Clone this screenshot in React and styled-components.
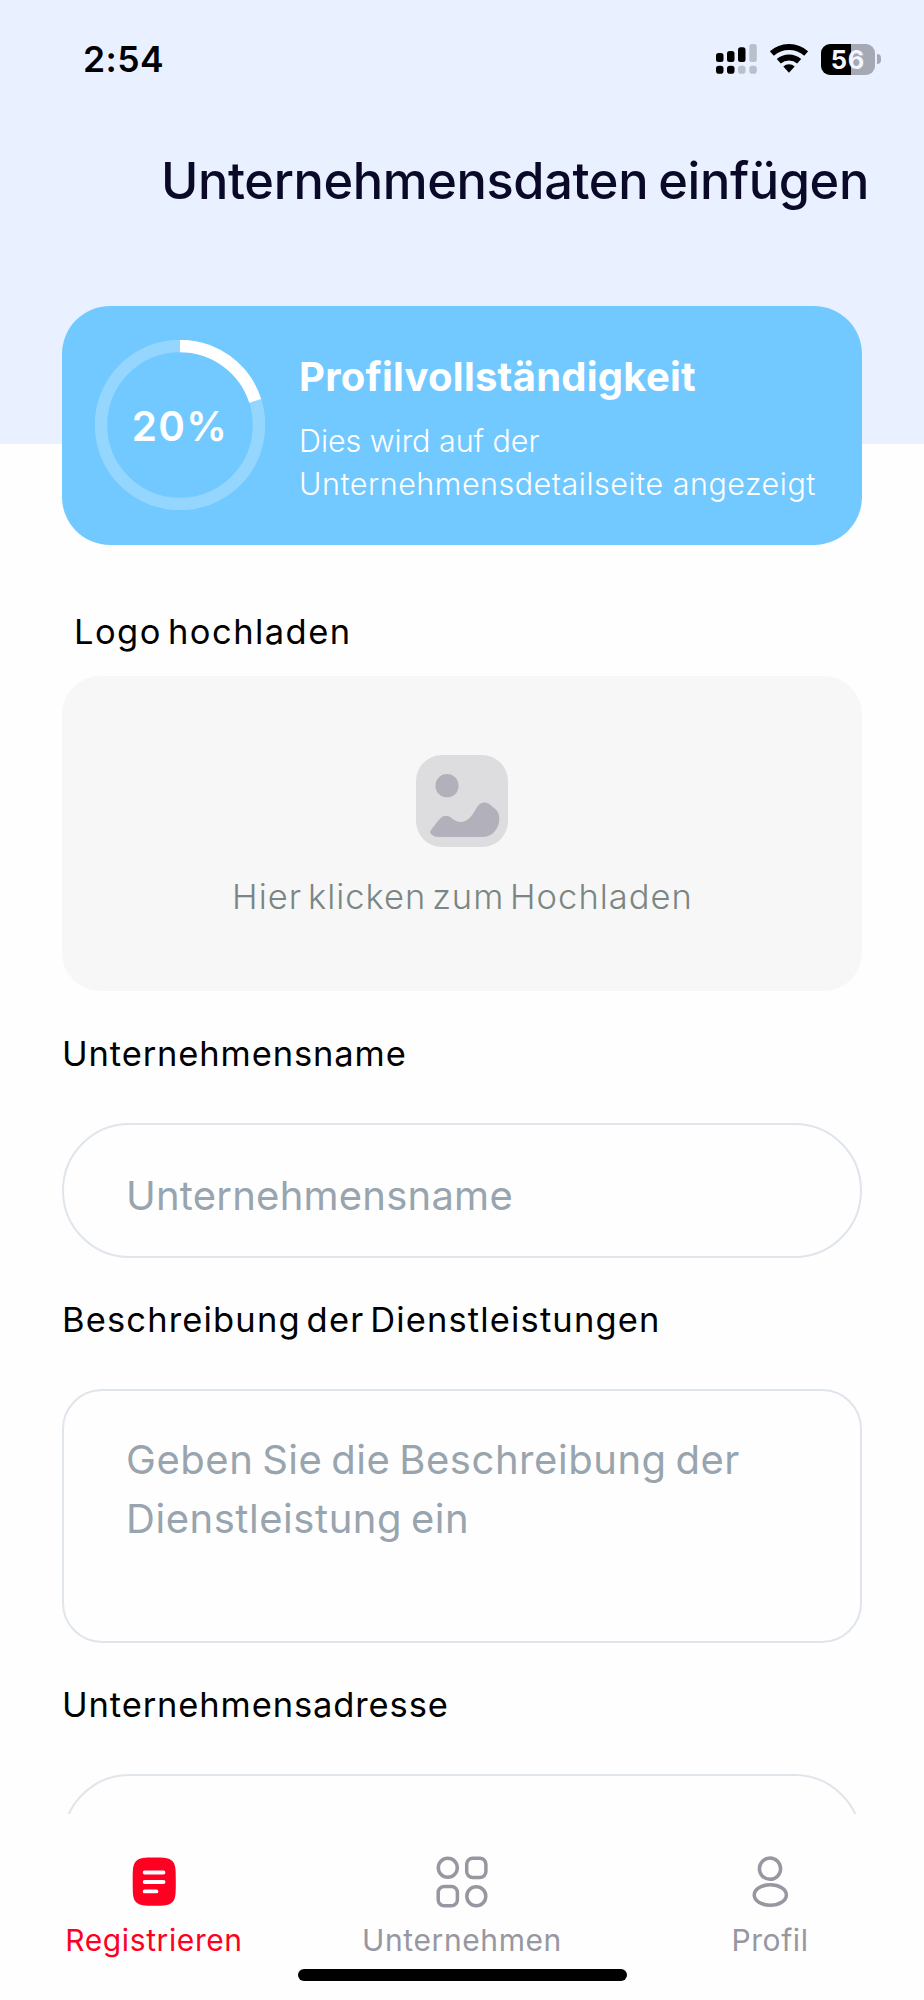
import styled, { createGlobalStyle } from "styled-components";

const GlobalStyle = createGlobalStyle`
  * {
    box-sizing: border-box;
  }
  body {
    margin: 0;
    background-color: #fefefe;
    font-family: "Inter", "Liberation Sans", sans-serif;
  }
`;

const Screen = styled.div`
  width: 924px;
  height: 2000px;
  display: flex;
  flex-direction: column;
  overflow: hidden;
`;

const Content = styled.main`
  flex: 1;
  min-height: 0;
  overflow: hidden;
`;

const Header = styled.header`
  height: 444px;
  background-color: #e9f0ff;
`;

const StatusBar = styled.div`
  height: 118px;
  padding: 0 43px 0 83px;
  display: flex;
  align-items: center;
  justify-content: space-between;
`;

const Time = styled.span`
  font-size: 35.5px;
  font-weight: 600;
  letter-spacing: 0.4px;
  color: #000;
`;

const StatusIcons = styled.div`
  display: flex;
  align-items: center;
  gap: 13px;
`;

const Battery = styled.div`
  display: flex;
  align-items: center;
  gap: 2px;
`;

const BatteryBody = styled.div`
  width: 54px;
  height: 31px;
  border-radius: 9px;
  background: linear-gradient(to right, #000 ${(p) => p.$level}%, #a4a9b4 ${(p) => p.$level}%);
  color: #f3f6ff;
  font-size: 25.5px;
  font-weight: 700;
  letter-spacing: 0.8px;
  line-height: 31px;
  text-align: center;
`;

const BatteryTip = styled.div`
  width: 4px;
  height: 10px;
  border-radius: 0 5px 5px 0;
  background-color: #a4a9b4;
`;

const Title = styled.h1`
  margin: 0;
  padding-left: 161px;
  font-size: 50.5px;
  font-weight: 500;
  line-height: 126px;
  letter-spacing: -0.37px;
  word-spacing: -3px;
  white-space: nowrap;
  color: #0a0a28;
`;

const Body = styled.div`
  padding: 0 62px;
  margin-top: -138px;
`;

const ProgressCard = styled.section`
  height: 239px;
  padding: 0 0 1px 33px;
  display: flex;
  align-items: center;
  gap: 34px;
  border-radius: 48px;
  background-color: #72c9ff;
  color: #fff;
`;

const Ring = styled.div`
  display: grid;
  place-items: center;

  > * {
    grid-area: 1 / 1;
  }
`;

const Percent = styled.span`
  padding-top: 3px;
  font-size: 40.5px;
  font-weight: 600;
  letter-spacing: 1.3px;
`;

const CardText = styled.div`
  padding-top: 8px;
`;

const CardTitle = styled.h2`
  margin: 0 0 19px;
  font-size: 40px;
  font-weight: 700;
  line-height: 48px;
  letter-spacing: 0.24px;
`;

const CardLine = styled.p`
  margin: 0;
  font-size: 30.5px;
  font-weight: 300;
  line-height: 42.4px;
  letter-spacing: ${(p) => p.$spacing}px;
  white-space: nowrap;
`;

const Label = styled.label`
  display: block;
  font-size: 34.5px;
  line-height: 46px;
  letter-spacing: ${(p) => p.$spacing || 0.88}px;
  word-spacing: -5px;
  color: #000;
`;

const UploadSection = styled.section`
  padding-top: 64px;

  ${Label} {
    padding-left: 12px;
  }
`;

const UploadBox = styled.div`
  height: 315px;
  margin-top: 21px;
  padding-top: 79px;
  display: flex;
  flex-direction: column;
  align-items: center;
  border-radius: 38px;
  background-color: #f7f7f7;
`;

const UploadHint = styled.span`
  margin-top: 27px;
  padding-left: 1px;
  font-size: 34.5px;
  font-weight: 300;
  line-height: 46px;
  letter-spacing: 1.02px;
  word-spacing: -5px;
  color: #7a8683;
`;

const Field = styled.div`
  margin-top: ${(p) => p.$top || 39}px;
`;

const Input = styled.input`
  display: block;
  width: 100%;
  height: 135px;
  margin-top: 46px;
  padding: 10px 61px 0 62px;
  border: 2px solid #dfe5eb;
  border-radius: 68px;
  outline: none;
  background: transparent;
  font-family: inherit;
  font-size: 40px;
  letter-spacing: 0.23px;

  &::placeholder {
    color: #98a4ae;
    opacity: 1;
  }
`;

const TextArea = styled.textarea`
  display: block;
  width: 100%;
  height: 254px;
  margin-top: 46px;
  padding: 39px 61px 0 62px;
  border: 2px solid #dfe5eb;
  border-radius: 40px;
  outline: none;
  resize: none;
  overflow: hidden;
  background: transparent;
  font-family: inherit;
  font-size: 40px;
  line-height: 59px;
  letter-spacing: 0.55px;
  word-spacing: -3px;

  &::placeholder {
    color: #98a4ae;
    opacity: 1;
  }
`;

const TabBar = styled.nav`
  height: 186px;
  padding-top: 42px;
  background-color: #fefefe;
`;

const Tabs = styled.div`
  display: grid;
  grid-template-columns: repeat(3, 1fr);
`;

const Tab = styled.a`
  display: flex;
  flex-direction: column;
  align-items: center;
  gap: 12px;
  font-size: 30px;
  line-height: 40px;
  letter-spacing: 0.6px;
  color: ${(p) => (p.$active ? "#ff0022" : "#9797a1")};
`;

const HomeIndicator = styled.div`
  width: 329px;
  height: 12px;
  margin: 9px auto 0;
  border-radius: 6px;
  background-color: #000;
`;

const SignalIcon = () => (
  <svg width="41" height="30" viewBox="0 0 41 30">
    <rect x="0" y="9" width="7.5" height="9" rx="2.5" />
    <rect x="11" y="7" width="7.5" height="11" rx="2.5" />
    <rect x="22" y="3.3" width="7.5" height="14.7" rx="2.5" />
    <rect x="33.3" y="0" width="7.5" height="18" rx="2.5" fill="#b9bfcb" />
    <rect x="0" y="21.7" width="7.5" height="8" rx="2.8" />
    <rect x="11" y="21.7" width="7.5" height="8" rx="2.8" />
    <rect x="22" y="21.7" width="7.5" height="8" rx="2.8" fill="#b9bfcb" />
    <rect x="33.3" y="21.7" width="7.5" height="8" rx="2.8" fill="#b9bfcb" />
  </svg>
);

const WifiIcon = () => (
  <svg width="38" height="30" viewBox="0 0 38 30">
    <g fill="none" stroke="#000" strokeWidth="6">
      <path d="M1.8 9.6A25.7 25.7 0 0 1 36.2 9.6" />
      <path d="M8.8 17.3A15.3 15.3 0 0 1 29.2 17.3" />
    </g>
    <path d="M19 28.7L13.3 22.6A8.4 8.4 0 0 1 24.7 22.6Z" />
  </svg>
);

const RADIUS = 79;
const LENGTH = 2 * Math.PI * RADIUS;

const ProgressRing = ({ value }) => (
  <Ring>
    <svg width="170" height="170" viewBox="0 0 170 170" fill="none" strokeWidth="12.5">
      <circle cx="85" cy="85" r={RADIUS} stroke="#fff" strokeOpacity="0.25" />
      <circle
        cx="85"
        cy="85"
        r={RADIUS}
        stroke="#fff"
        strokeDasharray={`${(LENGTH * value) / 100} ${LENGTH}`}
        transform="rotate(-90 85 85)"
      />
    </svg>
    <Percent>{value}%</Percent>
  </Ring>
);

const ImageIcon = () => (
  <svg width="92" height="92" viewBox="0 0 92 92">
    <rect width="92" height="92" rx="26" fill="#dddddf" />
    <circle cx="31" cy="30.7" r="11.6" fill="#b2b1bb" />
    <path
      d="M14.8 75.2C18 71 20.5 67.5 23.5 64.2C27.5 59.8 31.5 59.8 35.5 63C41 67.6 47.5 68.6 53 63.5C58 59 59.5 53.500 62.5 50.2C65.5 46.8 70 46.6 73.5 49.3L79.5 54.3C82 56.5 83.3 59.5 83.3 64C83.3 74 76 82 66.5 82H23.5C20 82 17.5 81.2 15.6 79.5C14 78 13.6 76.8 14.8 75.2Z"
      fill="#b2b1bb"
    />
  </svg>
);

const RegisterIcon = () => (
  <svg width="52" height="52" viewBox="0 0 52 52">
    <path
      d="M26 1.5C36 1.5 41 1.7 44.3 5C47.7 8.4 47.8 13 47.8 25.7C47.8 38.4 47.7 42.8 44.3 46.2C41 49.5 36 49.7 26.2 49.7C16.4 49.7 11.5 49.5 8.2 46.2C4.8 42.8 4.7 38.4 4.7 25.7C4.7 13 4.8 8.4 8.2 5C11.5 1.7 16.4 1.5 26 1.5Z"
      fill="#ff0022"
    />
    <path
      d="M16.7 16.5H35.5M16.7 26H35.5M16.7 35.4H28.4"
      stroke="#fff"
      strokeWidth="3.9"
      strokeLinecap="round"
    />
  </svg>
);

const CompaniesIcon = () => (
  <svg width="52" height="52" viewBox="0 0 52 52" fill="none" stroke="#9797a1" strokeWidth="3.5">
    <circle cx="11.8" cy="11.7" r="9.5" />
    <rect x="30.7" y="2.2" width="19.2" height="19.2" rx="6" />
    <rect x="2.2" y="30.6" width="19.2" height="19.2" rx="6" />
    <circle cx="40.3" cy="40.2" r="9.5" />
  </svg>
);

const ProfileIcon = () => (
  <svg width="52" height="52" viewBox="0 0 52 52" fill="none" stroke="#9797a1" strokeWidth="3.5">
    <circle cx="26" cy="12.7" r="10.6" />
    <ellipse cx="26.3" cy="39" rx="16.1" ry="10.2" />
  </svg>
);

const App = () => {
  return (
    <Screen>
      <GlobalStyle />
      <Content>
        <Header>
          <StatusBar>
            <Time>2:54</Time>
            <StatusIcons>
              <SignalIcon />
              <WifiIcon />
              <Battery>
                <BatteryBody $level={56}>56</BatteryBody>
                <BatteryTip />
              </Battery>
            </StatusIcons>
          </StatusBar>
          <Title>Unternehmensdaten einfügen</Title>
        </Header>
        <Body>
          <ProgressCard>
            <ProgressRing value={20} />
            <CardText>
              <CardTitle>Profilvollständigkeit</CardTitle>
              <CardLine $spacing={-0.05}>Dies wird auf der</CardLine>
              <CardLine $spacing={0.5}>Unternehmensdetailseite angezeigt</CardLine>
            </CardText>
          </ProgressCard>
          <UploadSection>
            <Label $spacing={1.45}>Logo hochladen</Label>
            <UploadBox>
              <ImageIcon />
              <UploadHint>Hier klicken zum Hochladen</UploadHint>
            </UploadBox>
          </UploadSection>
          <Field $top={40}>
            <Label>Unternehmensname</Label>
            <Input placeholder="Unternehmensname" />
          </Field>
          <Field>
            <Label $spacing={1.15}>Beschreibung der Dienstleistungen</Label>
            <TextArea placeholder="Geben Sie die Beschreibung der Dienstleistung ein" />
          </Field>
          <Field>
            <Label>Unternehmensadresse</Label>
            <Input />
          </Field>
        </Body>
      </Content>
      <TabBar>
        <Tabs>
          <Tab $active>
            <RegisterIcon />
            Registrieren
          </Tab>
          <Tab>
            <CompaniesIcon />
            Unternehmen
          </Tab>
          <Tab>
            <ProfileIcon />
            Profil
          </Tab>
        </Tabs>
        <HomeIndicator />
      </TabBar>
    </Screen>
  );
};

export default App;
